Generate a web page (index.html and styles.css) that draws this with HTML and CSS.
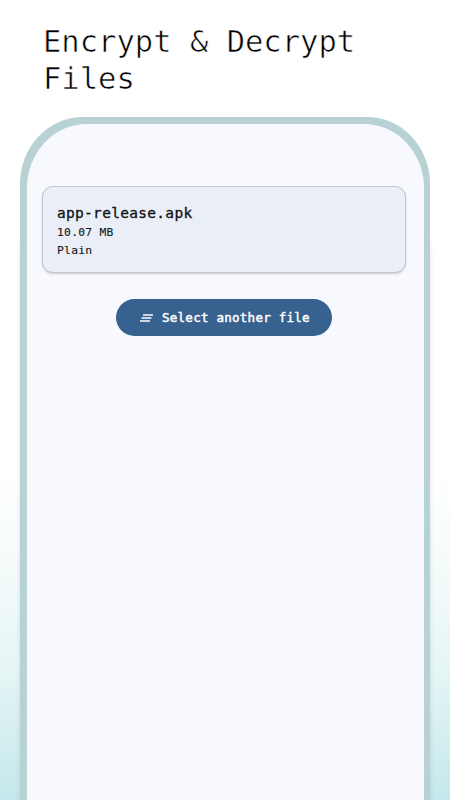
FILE: index.html
```html
<!DOCTYPE html>
<html lang="en">
<head>
<meta charset="utf-8">
<title>Encrypt &amp; Decrypt Files</title>
<link rel="stylesheet" href="styles.css">
</head>
<body>
<main class="page">
  <h1 class="headline">Encrypt &amp; Decrypt<br>Files</h1>
  <div class="phone">
    <div class="screen">
      <section class="file-card">
        <h2 class="file-name">app-release.apk</h2>
        <p class="file-meta">10.07 MB</p>
        <p class="file-meta">Plain</p>
      </section>
      <button class="select-button" type="button">
        <svg class="select-icon" width="14" height="8" viewBox="0 0 14 8" fill="none" stroke="currentColor" stroke-width="1.4"><path d="M3 1H12.9M1.5 4H11.4M0 7H9.9"/></svg>
        <span>Select another file</span>
      </button>
    </div>
  </div>
</main>
</body>
</html>
```

FILE: styles.css
```css
* {
  box-sizing: border-box;
}

body {
  margin: 0;
  font-family: "DejaVu Sans Mono", monospace;
}

.page {
  height: 800px;
  overflow: hidden;
  display: flex;
  flex-direction: column;
  background: linear-gradient(#fff 0, #fff 470px, #f5fcfb 560px, #e6f5f5 670px, #c4e8ec 800px);
}

.headline {
  flex: none;
  height: 117px;
  margin: 0;
  padding: 23px 0 0 43px;
  font-size: 30.5px;
  line-height: 37.4px;
  font-weight: 400;
  color: #000;
  -webkit-text-stroke: 0.6px #fff;
}

.phone {
  flex: none;
  width: 410px;
  height: 760px;
  margin-left: 20px;
  padding: 7px 6px 0 7px;
  border-radius: 63px 63px 0 0 / 67px 67px 0 0;
  background: #b8d1d3;
  box-shadow: 0 70px 4px rgba(80, 100, 100, 0.18);
}

.screen {
  height: 100%;
  padding: 62px 18px 0 15px;
  display: flex;
  flex-direction: column;
  align-items: center;
  border-radius: 60px 60px 0 0 / 64px 64px 0 0;
  background: #f8f9ff;
}

.file-card {
  width: 364px;
  height: 87px;
  padding: 16px 14px;
  border: 1px solid #c3c6cf;
  border-radius: 11px;
  background: #e9eef7;
  box-shadow: 0 1px 2px rgba(0, 0, 0, 0.18);
}

.file-name {
  margin: 0;
  font-size: 14.5px;
  letter-spacing: 0.3px;
  line-height: 20px;
  font-weight: 400;
  color: #101216;
  -webkit-text-stroke: 0.3px #101216;
}

.file-meta {
  margin: 0;
  font-size: 11.3px;
  letter-spacing: 0.28px;
  line-height: 18px;
  color: #191b20;
  -webkit-text-stroke: 0.15px #191b20;
}

.file-name + .file-meta {
  padding-top: 1px;
}

.select-button {
  width: 216px;
  height: 37px;
  margin-top: 26px;
  padding: 0 0 0 24px;
  display: flex;
  align-items: center;
  gap: 8px;
  border: 0;
  border-radius: 19px;
  background: #37618e;
  color: #fff;
  font: 400 12.6px/18px "DejaVu Sans Mono", monospace;
  letter-spacing: 0.2px;
  white-space: nowrap;
  -webkit-text-stroke: 0.45px #fff;
}

.select-icon {
  flex: none;
}
```
